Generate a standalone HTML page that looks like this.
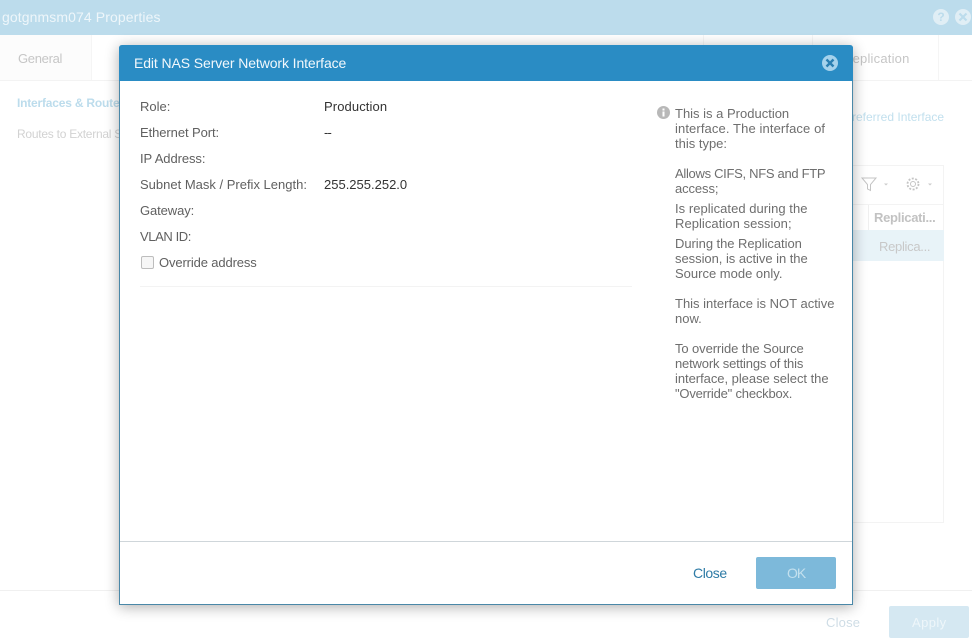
<!DOCTYPE html>
<html><head><meta charset="utf-8">
<style>
html,body{margin:0;padding:0;background:#fff}
#p{position:relative;width:972px;height:641px;overflow:hidden;background:#fff;font-family:"Liberation Sans",sans-serif;font-size:13px;color:#555}
.t{position:absolute;white-space:nowrap;line-height:15px}
.b{position:absolute}
.l{color:#606060}
.h{color:#6e6e6e}
.s{filter:blur(.35px)}
</style></head><body><div id="p">
<div class="b" style="left:0;top:0;width:972px;height:35px;background:#bcdcec"></div>
<div class="t s" style="left:2px;top:9px;font-size:14px;color:#eef6fa;line-height:17px;letter-spacing:.1px">gotgnmsm074 Properties</div>
<svg class="b s" style="left:930px;top:8px" width="42" height="18"><circle cx="11" cy="9" r="8" fill="#e0eef5"/><text x="11" y="13" font-family="Liberation Sans" font-size="12" font-weight="bold" text-anchor="middle" fill="#bcdcec">?</text><circle cx="33" cy="9" r="8" fill="#e0eef5"/><path d="M29.500 5.500l7 7M36.500 5.500l-7 7" stroke="#bcdcec" stroke-width="2.200"/></svg>
<div class="b" style="left:0;top:80px;width:972px;height:1px;background:#f3f3f3"></div>
<div class="b" style="left:91px;top:35px;width:1px;height:45px;background:#f5f5f5"></div>
<div class="b" style="left:703px;top:35px;width:1px;height:45px;background:#f5f5f5"></div>
<div class="b" style="left:812px;top:35px;width:1px;height:45px;background:#f5f5f5"></div>
<div class="b" style="left:938px;top:35px;width:1px;height:45px;background:#f5f5f5"></div>
<div class="b" style="left:0;top:35px;width:91px;height:45px;background:#fcfcfc"></div>
<div class="t s" style="left:18px;top:51px;color:#c6c6c6;letter-spacing:-.3px">General</div>
<div class="t s" style="left:843px;top:51px;color:#c6c6c6;letter-spacing:.2px">Replication</div>
<div class="t s" style="left:17px;top:96px;font-size:12px;font-weight:bold;color:#bcdcec;letter-spacing:-.2px">Interfaces &amp; Routes</div>
<div class="t s" style="left:17px;top:127px;font-size:12px;color:#d2d2d2;letter-spacing:-.25px">Routes to External S</div>
<div class="t s" style="left:844px;top:110px;font-size:12px;color:#c2e0ee">Preferred Interface</div>
<div class="b" style="left:853px;top:165px;width:91px;height:358px;border:1px solid #f3f3f3;border-left:0;box-sizing:border-box"></div>
<div class="b" style="left:853px;top:204px;width:91px;height:1px;background:#f3f3f3"></div>
<div class="b" style="left:853px;top:230px;width:91px;height:31px;background:#e8f3f8"></div>
<div class="b" style="left:868px;top:205px;width:1px;height:25px;background:#efefef"></div>
<svg class="b s" style="left:860px;top:175px" width="80" height="18" fill="none" stroke="#c4c4c4"><path d="M2 3h14l-5.500 6.500v6l-3-1.500v-4.500z"/><path d="M24 8.500l2 2 2-2z" fill="#ccc" stroke="none"/><circle cx="53" cy="9" r="2.500"/><circle cx="53" cy="9" r="5.500" stroke-width="1.800" stroke-dasharray="2 1.500"/><path d="M68 8.500l2 2 2-2z" fill="#ccc" stroke="none"/></svg>
<div class="t s" style="left:874px;top:210px;font-size:13px;font-weight:bold;color:#c2c2c2;letter-spacing:-.3px">Replicati...</div>
<div class="t s" style="left:879px;top:239px;color:#c8c8c8;letter-spacing:-.3px">Replica...</div>
<div class="b" style="left:0;top:590px;width:972px;height:1px;background:#f0f0f0"></div>
<div class="t s" style="left:826px;top:615px;color:#cfdde6;letter-spacing:.2px">Close</div>
<div class="b" style="left:889px;top:606px;width:80px;height:32px;background:#d5e8f2;border-radius:2px"></div>
<div class="t s" style="left:912px;top:615px;color:#eef6fa;letter-spacing:.4px">Apply</div>

<div class="b" style="left:119px;top:45px;width:734px;height:560px;box-sizing:border-box;background:#fff;border:1px solid #4a88a8;border-top:0;border-radius:3px 3px 0 0;box-shadow:0 2px 14px rgba(0,0,0,.32)"></div>
<div class="b" style="left:119px;top:45px;width:734px;height:36px;background:#2a8cc4;border-radius:3px 3px 0 0"></div>
<div class="t" style="left:134px;top:55px;font-size:14px;color:#f2f8fc;line-height:17px;letter-spacing:-.1px">Edit NAS Server Network Interface</div>
<svg class="b" style="left:821px;top:54px" width="18" height="18"><circle cx="9" cy="9" r="8" fill="#a5d2ec"/><path d="M5.500 5.500l7 7M12.500 5.500l-7 7" stroke="#2a7fb2" stroke-width="2.400"/></svg>

<div class="t l" style="left:140px;top:99px">Role:</div>
<div class="t l" style="left:140px;top:125px;letter-spacing:-.08px">Ethernet Port:</div>
<div class="t l" style="left:140px;top:151px;letter-spacing:-.08px">IP Address:</div>
<div class="t l" style="left:140px;top:177px">Subnet Mask / Prefix Length:</div>
<div class="t l" style="left:140px;top:203px;letter-spacing:-.1px">Gateway:</div>
<div class="t l" style="left:140px;top:229px;letter-spacing:-.4px">VLAN ID:</div>
<div class="t" style="left:324px;top:99px;color:#333;letter-spacing:.1px">Production</div>
<div class="t" style="left:324px;top:125px;color:#333;letter-spacing:-.8px">--</div>
<div class="t" style="left:324px;top:177px;color:#333">255.255.252.0</div>
<div class="b" style="left:141px;top:256px;width:13px;height:13px;box-sizing:border-box;border:1px solid #bdbdbd;border-radius:2px;background:#f6f6f6"></div>
<div class="t l" style="left:159px;top:255px;letter-spacing:-.13px">Override address</div>
<div class="b" style="left:140px;top:286px;width:492px;height:1px;background:#f3f3f3"></div>

<svg class="b" style="left:656px;top:105px" width="15" height="15"><circle cx="7.500" cy="7.500" r="6.500" fill="#b8b8b8"/><rect x="6.500" y="6.500" width="2" height="5" fill="#fff"/><rect x="6.500" y="3.500" width="2" height="2" fill="#fff"/></svg>
<div class="t h" style="left:675px;top:106px">This is a Production</div>
<div class="t h" style="left:675px;top:121px;letter-spacing:.11px">interface. The interface of</div>
<div class="t h" style="left:675px;top:136px">this type:</div>
<div class="t h" style="left:675px;top:166px;letter-spacing:-.3px">Allows CIFS, NFS and FTP</div>
<div class="t h" style="left:675px;top:181px;letter-spacing:-.1px">access;</div>
<div class="t h" style="left:675px;top:201px;letter-spacing:.04px">Is replicated during the</div>
<div class="t h" style="left:675px;top:216px;letter-spacing:.05px">Replication session;</div>
<div class="t h" style="left:675px;top:236px;letter-spacing:-.05px">During the Replication</div>
<div class="t h" style="left:675px;top:251px;letter-spacing:-.04px">session, is active in the</div>
<div class="t h" style="left:675px;top:266px">Source mode only.</div>
<div class="t h" style="left:675px;top:296px">This interface is NOT active</div>
<div class="t h" style="left:675px;top:311px">now.</div>
<div class="t h" style="left:675px;top:341px;letter-spacing:-.1px">To override the Source</div>
<div class="t h" style="left:675px;top:356px;letter-spacing:-.17px">network settings of this</div>
<div class="t h" style="left:675px;top:371px;letter-spacing:-.04px">interface, please select the</div>
<div class="t h" style="left:675px;top:386px;letter-spacing:-.2px">"Override" checkbox.</div>

<div class="b" style="left:120px;top:541px;width:732px;height:1px;background:#cfd6da"></div>
<div class="t" style="left:693px;top:566px;font-size:14px;color:#2e7ba6;letter-spacing:-.4px">Close</div>
<div class="b" style="left:756px;top:557px;width:80px;height:32px;background:#7db9da;border-radius:2px"></div>
<div class="t" style="left:787px;top:566px;font-size:14px;color:#c3e0ee;letter-spacing:-1px">OK</div>
</div></body></html>
